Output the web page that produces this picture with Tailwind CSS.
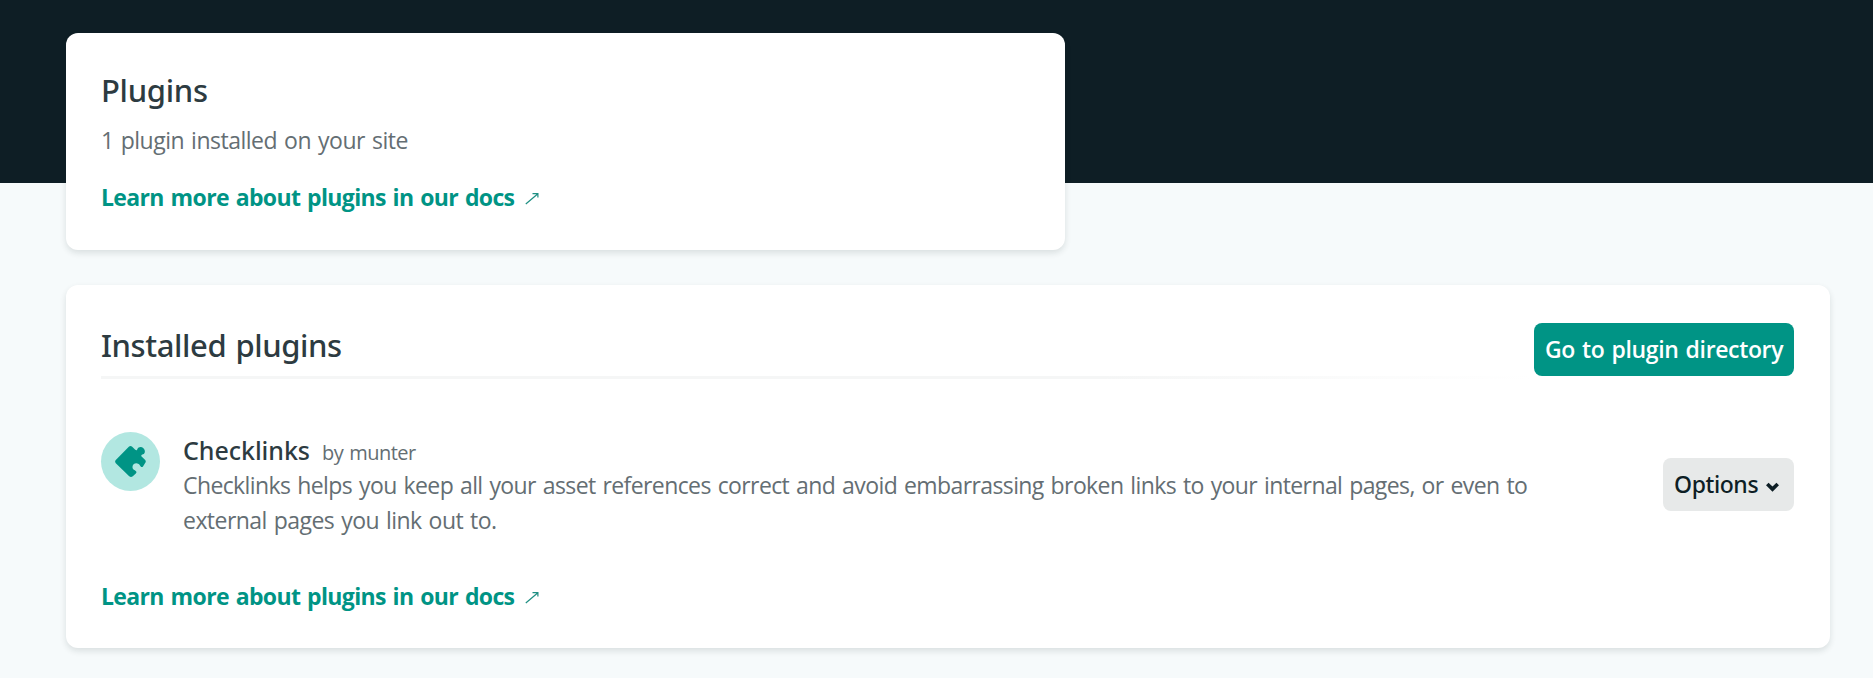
<!DOCTYPE html>
<html lang="en">
<head>
<meta charset="utf-8">
<title>Plugins</title>
<script src="https://cdn.jsdelivr.net/npm/@tailwindcss/browser@4"></script>
</head>
<body class="bg-[#f6fafb] font-['Open_Sans',sans-serif] text-[23px] leading-[35px] [word-spacing:1.5px] text-[#646e73] h-[678px] overflow-hidden">
  <header class="h-[183px] bg-[#0e1e25]"></header>
  <main class="relative -mt-[150px] pl-[66px] pr-[43px] flex flex-col gap-[35px]">
    <section class="w-[999px] h-[217px] rounded-xl bg-white px-[35px] pt-9 shadow-[0_3px_6px_rgba(14,30,37,0.12)]">
      <h1 class="font-['Noto_Sans',sans-serif] font-medium text-[31px] leading-[42px] tracking-[-0.3px] text-[#2d3b41]">Plugins</h1>
      <p class="mt-[11px] leading-9 tracking-[-0.49px]">1 plugin installed on your site</p>
      <a class="mt-[21px] flex items-center leading-9 font-bold tracking-[-0.65px] text-[#009485]">Learn more about plugins in our docs
        <svg class="ml-[11px] mt-[2px] w-[14px] h-[13px]" viewBox="0 0 14 13" fill="none" stroke="#1f8f83" stroke-width="1.2"><path d="M.8 12 12.6 2M7.500 1.600H12.900V5.600"/></svg></a>
    </section>
    <section class="h-[363px] rounded-xl bg-white pl-[35px] pr-9 pt-[38px] shadow-[0_3px_6px_rgba(14,30,37,0.12)]">
      <div class="flex items-start">
        <div class="flex-1 pt-px">
          <h2 class="font-['Noto_Sans',sans-serif] font-medium text-[31px] leading-[42px] tracking-[-0.4px] text-[#2d3b41]">Installed plugins</h2>
          <div class="mt-[10px] h-[3px] bg-linear-to-r from-[#f5f6f6] from-70% to-white"></div>
        </div>
        <button class="w-[260px] h-[53px] rounded-lg bg-[#009485] text-white font-semibold [word-spacing:1.5px] tracking-[-0.36px] whitespace-nowrap">Go to plugin directory</button>
      </div>
      <div class="mt-[53px] flex">
        <div class="w-[59px] h-[59px] rounded-full bg-[#b2e7e1] flex items-center justify-center shrink-0">
          <svg class="w-[31px] h-[31px]" viewBox="0 0 31 31" fill="#009485"><path d="M.8 17.2Q-.6 15.6.8 14L13.8.8Q15.5-.6 17.2.8L20 3.5C21.3 4.8 22.2 4 22.3 3.2C23.2.8 26.5.4 28.4 2.2C30.5 4.2 30.3 7.3 28 8.3C27.2 8.8 25.5 9.2 26.6 10.6L30.2 14Q31.3 15.6 30.3 16.8L28 20.4Q27 21.6 25.7 20.5C24.3 19 24.2 17.5 21.5 17.3C19 17.3 17.3 19.2 17.5 21.3C17.7 24 19.6 23.9 21 25.2Q22 26.3 20.8 27.4L17.8 30.3Q16 31.6 14.2 30.3Z"/></svg>
        </div>
        <div class="ml-[23px] w-[1400px] shrink-0">
          <div class="flex items-baseline h-[36px] pt-px">
            <h3 class="font-['Noto_Sans',sans-serif] font-medium text-[25px] tracking-[-0.05px] text-[#2d3b41]">Checklinks</h3>
            <span class="ml-[12px] text-[20px] tracking-[-0.55px]">by munter</span>
          </div>
          <p class="-mb-px"><span class="tracking-[-0.6px]">Checklinks helps you keep all your asset references correct and avoid embarrassing broken links to your internal pages, or even to</span><br><span class="tracking-[-0.54px]">external pages you link out to.</span></p>
        </div>
        <button class="ml-auto self-center w-[131px] h-[53px] rounded-lg bg-[#e7e9e9] pl-[11px] flex items-center font-['Noto_Sans',sans-serif] font-medium tracking-[-0.4px] text-[#0e1e25]">Options
          <svg class="ml-[8px] mt-[4px] w-[13px] h-[10px]" viewBox="0 0 13 10" fill="none" stroke="#0e1e25" stroke-width="3.6"><path d="M1.3 1.9 6.5 7.1 11.7 1.9"/></svg></button>
      </div>
      <a class="mt-[41px] flex items-center leading-9 font-bold tracking-[-0.65px] text-[#009485]">Learn more about plugins in our docs
        <svg class="ml-[11px] mt-[2px] w-[14px] h-[13px]" viewBox="0 0 14 13" fill="none" stroke="#1f8f83" stroke-width="1.2"><path d="M.8 12 12.6 2M7.500 1.600H12.900V5.600"/></svg></a>
    </section>
  </main>
</body>
</html>
